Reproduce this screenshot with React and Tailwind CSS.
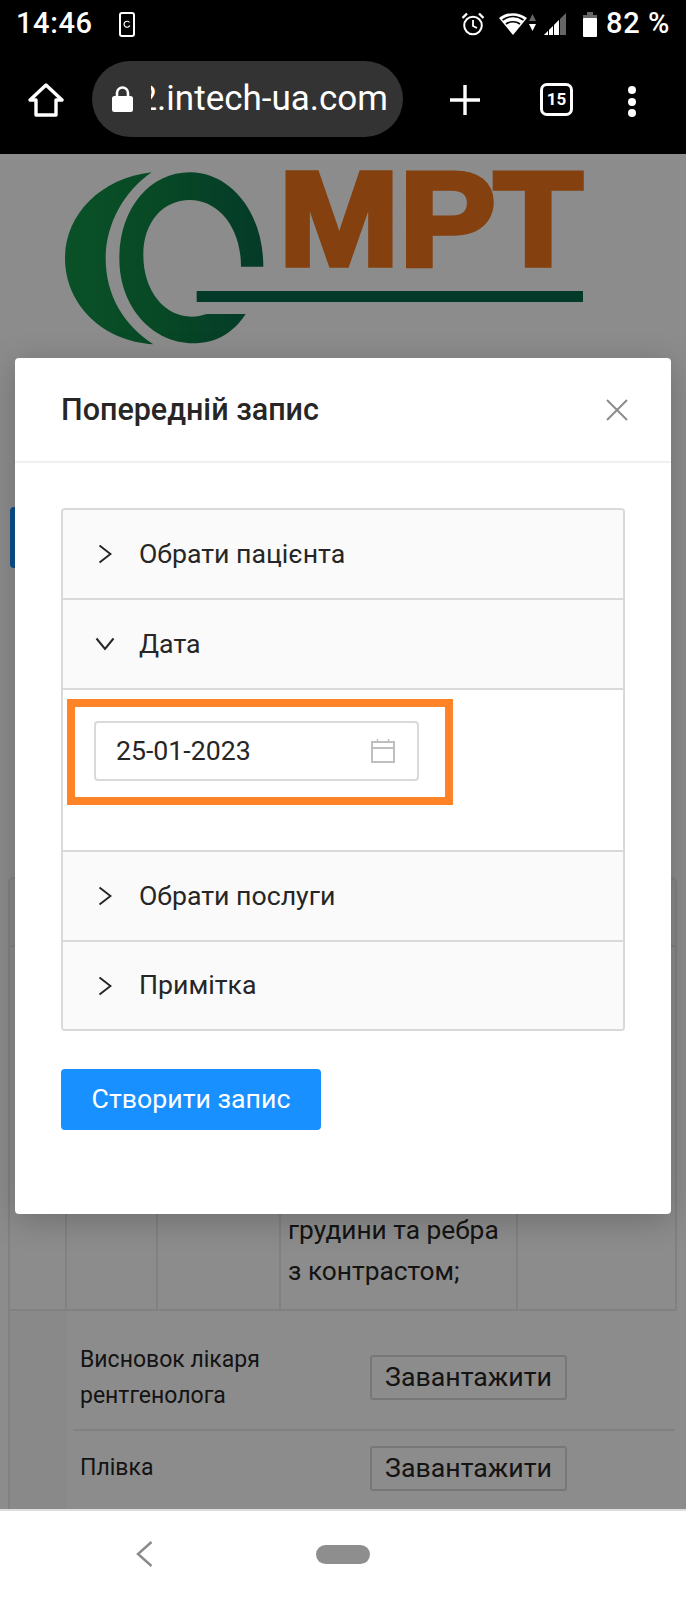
import React from "react";

function Chevron({ open }) {
  if (open) {
    return (
      <svg width="20" height="14" viewBox="0 0 20 14" fill="none" className="ml-[32px] mr-[24px]">
        <path d="M1.5 1.5 L10 12 L18.5 1.5" stroke="#262626" strokeWidth="2" />
      </svg>
    );
  }
  return (
    <svg width="14" height="20" viewBox="0 0 14 20" fill="none" className="ml-[35px] mr-[27px]">
      <path d="M1.5 1.5 L12.5 10 L1.5 18.5" stroke="#262626" strokeWidth="2" />
    </svg>
  );
}

function PanelHeader({ title, open, last }) {
  return (
    <div className={`flex items-center bg-[#fafafa] text-[26.7px] text-[#262626] ${last ? "h-[87px]" : "h-[90px] border-b-2 border-[#d9d9d9]"}`}>
      <Chevron open={open} />
      <span>{title}</span>
    </div>
  );
}

function StatusBar() {
  return (
    <div className="flex shrink-0 items-center h-[48px] bg-black text-white pl-[16px] pr-[16px]">
      <span className="text-[29px] font-medium tracking-[0.6px]">14:46</span>
      <svg width="16" height="25" viewBox="0 0 16 25" fill="none" className="ml-[26px]">
        <rect x="1" y="1" width="14" height="23" rx="2" stroke="white" strokeWidth="2" />
        <path d="M10.5 10.5 A3 3 0 1 0 10.8 13.5" stroke="white" strokeWidth="1.2" />
      </svg>
      <div className="flex items-center ml-auto">
        <svg width="24" height="24" viewBox="0 0 24 24" fill="none">
          <circle cx="12" cy="13.5" r="8.8" stroke="white" strokeWidth="2" />
          <path d="M12 8v6l4 2" stroke="white" strokeWidth="1.8" />
          <path d="M1.5 6 L6 1.5 M22.5 6 L18 1.5" stroke="white" strokeWidth="2.4" />
        </svg>
        <svg width="38" height="22" viewBox="0 0 38 22" fill="none" className="ml-[14px]">
          <path d="M0 5 C8 -1.5 20 -1.5 28 5 L14 22 Z" fill="white" />
          <path d="M3.5 7 C10 2.5 18 2.5 24.5 7 M7 11 C11 8 17 8 21 11" stroke="black" strokeWidth="1.6" />
          <path d="M33.5 1 L37 8 H30 Z" fill="#666" />
          <path d="M30 11 H37 L33.5 18 Z" fill="white" />
        </svg>
        <svg width="23" height="22" viewBox="0 0 23 22" className="ml-[7px]">
          <path d="M0 22 L22 0 V22 Z" fill="#666" />
          <path d="M0 22 L16 6 V22 Z" fill="white" />
          <path d="M4.5 14 V22 M9.5 10 V22 M15.5 6 V22" stroke="black" strokeWidth="1" />
        </svg>
        <svg width="14" height="25" viewBox="0 0 14 25" className="ml-[16px]">
          <path d="M4 0 H10 V3 H14 V8 H0 V3 H4 Z" fill="#666" />
          <rect x="0" y="6" width="14" height="19" rx="1" fill="white" />
        </svg>
        <span className="ml-[9px] text-[29px] font-medium tracking-[0.6px]">82 %</span>
      </div>
    </div>
  );
}

function Toolbar() {
  return (
    <div className="relative z-10 flex shrink-0 items-start h-[106px] bg-black text-white pt-[13px]">
      <svg width="36" height="34" viewBox="0 0 36 34" fill="none" className="ml-[28px] mt-[22px]">
        <path d="M18 2 L34 17 H28 V32 H8 V17 H2 Z" stroke="white" strokeWidth="3.4" strokeLinejoin="round" />
      </svg>
      <div className="flex items-center ml-[28px] w-[311px] h-[76px] rounded-full bg-[#333333]">
        <svg width="21" height="26" viewBox="0 0 21 26" fill="none" className="ml-[20px]">
          <path d="M5 11 V7 A5.5 5.5 0 0 1 16 7 V11" stroke="white" strokeWidth="2.6" />
          <rect x="0" y="10" width="21" height="16" rx="2.5" fill="white" />
        </svg>
        <div className="flex justify-end overflow-hidden ml-[18px] w-[237px]">
          <span className="text-[35px] whitespace-nowrap">2.intech-ua.com</span>
        </div>
      </div>
      <svg width="30" height="30" viewBox="0 0 30 30" fill="none" className="ml-[47px] mt-[24px]">
        <path d="M15 0 V30 M0 15 H30" stroke="white" strokeWidth="3.4" />
      </svg>
      <div className="flex items-center justify-center ml-[60px] mt-[22px] w-[33px] h-[33px] border-[3px] border-white rounded-[7px] text-[17px] font-bold">
        15
      </div>
      <div className="flex flex-col items-center gap-[3.5px] ml-[55px] mt-[25px]">
        <div className="w-[8px] h-[8px] rounded-full bg-white" />
        <div className="w-[8px] h-[8px] rounded-full bg-white" />
        <div className="w-[8px] h-[8px] rounded-full bg-white" />
      </div>
    </div>
  );
}

function Logo() {
  // viewBox is 3x the page pixels
  return (
    <svg width="530" height="190" viewBox="0 0 1590 570" className="ml-[60px] mt-[11px] overflow-visible">
      <defs>
        <linearGradient id="logoGreen" gradientUnits="userSpaceOnUse" x1="0" y1="0" x2="610" y2="0">
          <stop offset="0" stopColor="#129549" />
          <stop offset="0.5" stopColor="#0e8444" />
          <stop offset="1" stopColor="#076a4b" />
        </linearGradient>
      </defs>
      <path
        d="M275 22 C120 40 15 150 15 280 C15 420 130 530 280 538 C190 480 137 390 137 280 C137 180 190 80 275 22 Z"
        fill="url(#logoGreen)"
      />
      <path
        d="M610 305 C610 140 510 22 390 22 C270 22 178 130 178 280 C178 430 280 535 400 535 C465 535 520 505 557 447 L440 447 C425 452 410 455 395 455 C315 455 250 380 250 270 C250 170 310 105 390 105 C470 105 543 180 543 305 Z"
        fill="url(#logoGreen)"
      />
      <rect x="410" y="378" width="1159" height="33" fill="#076949" />
      <text
        x="656"
        y="299"
        fontFamily="Liberation Sans, sans-serif"
        fontWeight="700"
        fontSize="398"
        textLength="911"
        lengthAdjust="spacingAndGlyphs"
        fill="#f0761b"
        stroke="#f0761b"
        strokeWidth="16"
      >
        МРТ
      </text>
    </svg>
  );
}

function BackgroundPage() {
  return (
    <div className="bg-white h-full text-[#262626]">
      <Logo />
      <div className="ml-[10px] mt-[152px] w-[200px] h-[61px] rounded-[4px] bg-[#1890ff]" />

      <div className="ml-[8px] mt-[309px] w-[669px]">
        <div className="h-[70px] bg-[#fafafa] border-2 border-[#ececec] rounded-t-[6px]" />
        <div className="grid grid-cols-[57px_91px_123px_237px_161px] h-[364px] border-b-2 border-l-2 border-r-2 border-[#ececec]">
          <div className="border-r-2 border-[#ececec]" />
          <div className="border-r-2 border-[#ececec]" />
          <div className="border-r-2 border-[#ececec]" />
          <div className="flex flex-col justify-end border-r-2 border-[#ececec] pl-[7px] pb-[17px] text-[26.3px] leading-[41px]">
            <p>грудини та ребра</p>
            <p>з контрастом;</p>
          </div>
          <div />
        </div>
        <div className="flex bg-[#fafafa] border-l-2 border-[#ececec] h-[300px]">
          <div className="w-[57px] shrink-0" />
          <div className="flex-1 bg-white pt-[15px]">
            <div className="flex items-center h-[105px] ml-[6px] mr-[2px] border-b-2 border-[#ececec] pl-[7px]">
              <div className="w-[290px] text-[23px] leading-[36px]">
                <p>Висновок лікаря</p>
                <p>рентгенолога</p>
              </div>
              <div className="flex items-center justify-center w-[197px] h-[45px] border-2 border-[#d9d9d9] rounded-[3px] text-[26.7px]">
                Завантажити
              </div>
            </div>
            <div className="flex items-center h-[74px] ml-[6px] mr-[2px] pl-[7px]">
              <div className="w-[290px] text-[23px] leading-[36px]">Плівка</div>
              <div className="flex items-center justify-center w-[197px] h-[45px] border-2 border-[#d9d9d9] rounded-[3px] text-[26.7px]">
                Завантажити
              </div>
            </div>
          </div>
        </div>
      </div>
    </div>
  );
}

function Modal() {
  return (
    <div className="absolute left-[15px] top-[204px] w-[656px] h-[856px] bg-white rounded-[4px] shadow-[0_6px_32px_rgba(0,0,0,0.22)]">
      <div className="flex items-center justify-between h-[105px] pl-[46px] pr-[43px] border-b-2 border-[#f0f0f0]">
        <h2 className="text-[30.5px] font-medium text-[#262626]">Попередній запис</h2>
        <svg width="22" height="22" viewBox="0 0 22 22" fill="none">
          <path d="M1 1 L21 21 M21 1 L1 21" stroke="#8c8c8c" strokeWidth="2" />
        </svg>
      </div>

      <div className="px-[46px] pt-[45px]">
        <div className="border-2 border-[#d9d9d9] rounded-[4px] overflow-hidden">
          <PanelHeader title="Обрати пацієнта" />
          <PanelHeader title="Дата" open />
          <div className="h-[162px] border-b-2 border-[#d9d9d9] pl-[4px] pt-[9px]">
            <div className="w-[386px] h-[106px] border-8 border-[#ff8427] pl-[19px] pt-[14px]">
              <div className="flex items-center justify-between w-[325px] h-[60px] border-2 border-[#d9d9d9] rounded-[4px] pl-[20px] pr-[22px] text-[26.7px] text-[#262626]">
                <span>25-01-2023</span>
                <svg width="24" height="24" viewBox="0 0 24 24" fill="none">
                  <rect x="1" y="3" width="22" height="20" stroke="#bfbfbf" strokeWidth="2" />
                  <path d="M1 9 H23" stroke="#bfbfbf" strokeWidth="2" />
                  <path d="M6.5 0 V4 M17.5 0 V4" stroke="#bfbfbf" strokeWidth="1.5" />
                </svg>
              </div>
            </div>
          </div>
          <PanelHeader title="Обрати послуги" />
          <PanelHeader title="Примітка" last />
        </div>
        <button className="mt-[38px] w-[260px] h-[61px] bg-[#1890ff] text-white text-[26.7px] rounded-[4px]">
          Створити запис
        </button>
      </div>
    </div>
  );
}

export default function App() {
  return (
    <div className="flex flex-col w-[686px] h-[1601px] overflow-hidden bg-white font-['Roboto',sans-serif]">
      <StatusBar />
      <Toolbar />
      <main className="relative flex-1 min-h-0">
        <BackgroundPage />
        <div className="absolute inset-0 bg-black/45" />
        <Modal />
      </main>
      <nav className="relative z-10 flex shrink-0 items-center h-[92px] bg-white border-t-2 border-[#dddddd]">
        <svg width="17" height="26" viewBox="0 0 17 26" fill="none" className="ml-[136px] -mt-[4px]">
          <path d="M15.5 1 L2 13 L15.5 25" stroke="#8a8a8a" strokeWidth="2.4" />
        </svg>
        <div className="ml-[163px] -mt-[4px] w-[54px] h-[19px] rounded-full bg-[#8e8e8e]" />
      </nav>
    </div>
  );
}
